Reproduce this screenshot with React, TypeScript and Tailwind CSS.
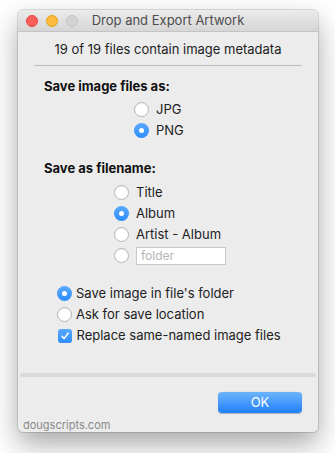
import React from 'react';

const font = { fontFamily: 'Inter, "Liberation Sans", Arial, sans-serif' };

function Radio({ checked }: { checked?: boolean }) {
  if (checked) {
    return (
      <span className="flex h-[15px] w-[15px] shrink-0 items-center justify-center rounded-full bg-gradient-to-b from-[#5aaafd] to-[#2a8cfb]">
        <span className="h-[5px] w-[5px] rounded-full bg-white" />
      </span>
    );
  }
  return <span className="h-[15px] w-[15px] shrink-0 rounded-full border border-[#b4b4b4] bg-white shadow-[inset_0_1px_1px_rgba(0,0,0,0.06)]" />;
}

function Check() {
  return (
    <span className="flex h-[14px] w-[14px] shrink-0 items-center justify-center rounded-[3px] bg-gradient-to-b from-[#5aaafd] to-[#2a8cfb]">
      <svg width="10" height="10" viewBox="0 0 10 10" fill="none">
        <path d="M2 5.2 L4.1 7.6 L8.2 2" stroke="white" strokeWidth="1.5" strokeLinecap="round" strokeLinejoin="round" />
      </svg>
    </span>
  );
}

function Row({ checked, label, gap = 'gap-[7px]', children }: { checked?: boolean; label?: string; gap?: string; children?: React.ReactNode }) {
  return (
    <div className={`flex h-[21px] items-center ${gap}`}>
      <Radio checked={checked} />
      {label && <span className="text-[13px] text-[#222]">{label}</span>}
      {children}
    </div>
  );
}

export default function App() {
  return (
    <div className="h-[453px] w-[335px] bg-white pl-[18px] pt-[10px]" style={font}>
      <div className="flex h-[422px] w-[300px] flex-col overflow-hidden rounded-[5px] bg-[#ececec] shadow-[0_12px_28px_rgba(0,0,0,0.35),0_0_0_1px_rgba(0,0,0,0.12)]">
        {/* title bar */}
        <div className="relative flex h-[22px] shrink-0 items-center border-b border-[#c4c4c4] bg-gradient-to-b from-[#ebebeb] to-[#d6d6d6]">
          <div className="flex items-center gap-[8px] pl-[8px]">
            <span className="h-[12px] w-[12px] rounded-full border border-[#e2463f] bg-[#fc605c]" />
            <span className="h-[12px] w-[12px] rounded-full border border-[#e1a116] bg-[#fdbc40]" />
            <span className="h-[12px] w-[12px] rounded-full border border-[#c4c4c4] bg-[#d3d3d3]" />
          </div>
          <div className="absolute inset-0 flex items-center justify-center text-[13px] text-[#4d4d4d]">Drop and Export Artwork</div>
        </div>

        <div className="flex flex-1 flex-col">
          <div className="pt-[10px] text-center text-[13px] leading-[14px] text-[#222]">19 of 19 files contain image metadata</div>
          <div className="mx-[16px] mt-[9px] border-t border-[#bdbdbd]" />

          <div className="mt-[12px] pl-[26px] text-[13px] font-bold leading-[16px] text-[#111]">Save image files as:</div>
          <div className="mt-[5px] flex flex-col pl-[116px]">
            <Row label="JPG" />
            <Row checked label="PNG" />
          </div>

          <div className="mt-[19px] pl-[26px] text-[13px] font-bold leading-[16px] text-[#111]">Save as filename:</div>
          <div className="mt-[6px] flex flex-col pl-[96px]">
            <Row label="Title" />
            <Row checked label="Album" />
            <Row label="Artist - Album" />
            <Row>
              <span className="flex h-[18px] w-[90px] items-center border border-[#c8c8c8] bg-white pl-[4px] text-[12px] text-[#b5b5b5]">folder</span>
            </Row>
          </div>

          <div className="mt-[17px] flex flex-col pl-[39px]">
            <Row checked label="Save image in file's folder" gap="gap-[4px]" />
            <Row label="Ask for save location" gap="gap-[4px]" />
            <div className="flex h-[21px] items-center gap-[5px] pl-[0.5px]">
              <Check />
              <span className="text-[13px] text-[#222]">Replace same-named image files</span>
            </div>
          </div>

          <div className="mx-[2px] mt-[27px] h-[4px] rounded-full bg-[#dadada]" />

          <div className="mt-[15px] flex justify-end pr-[16px]">
            <button className="h-[21px] w-[84px] rounded-[4px] bg-gradient-to-b from-[#6cb3fa] to-[#1a7ffb] text-[13px] text-white shadow-[0_0.5px_1px_rgba(0,0,0,0.25)]">OK</button>
          </div>

          <div className="mt-[6px] pl-[5px] text-[11px] leading-[12px] text-[#8a8a8a]">dougscripts.com</div>
        </div>
      </div>
    </div>
  );
}
